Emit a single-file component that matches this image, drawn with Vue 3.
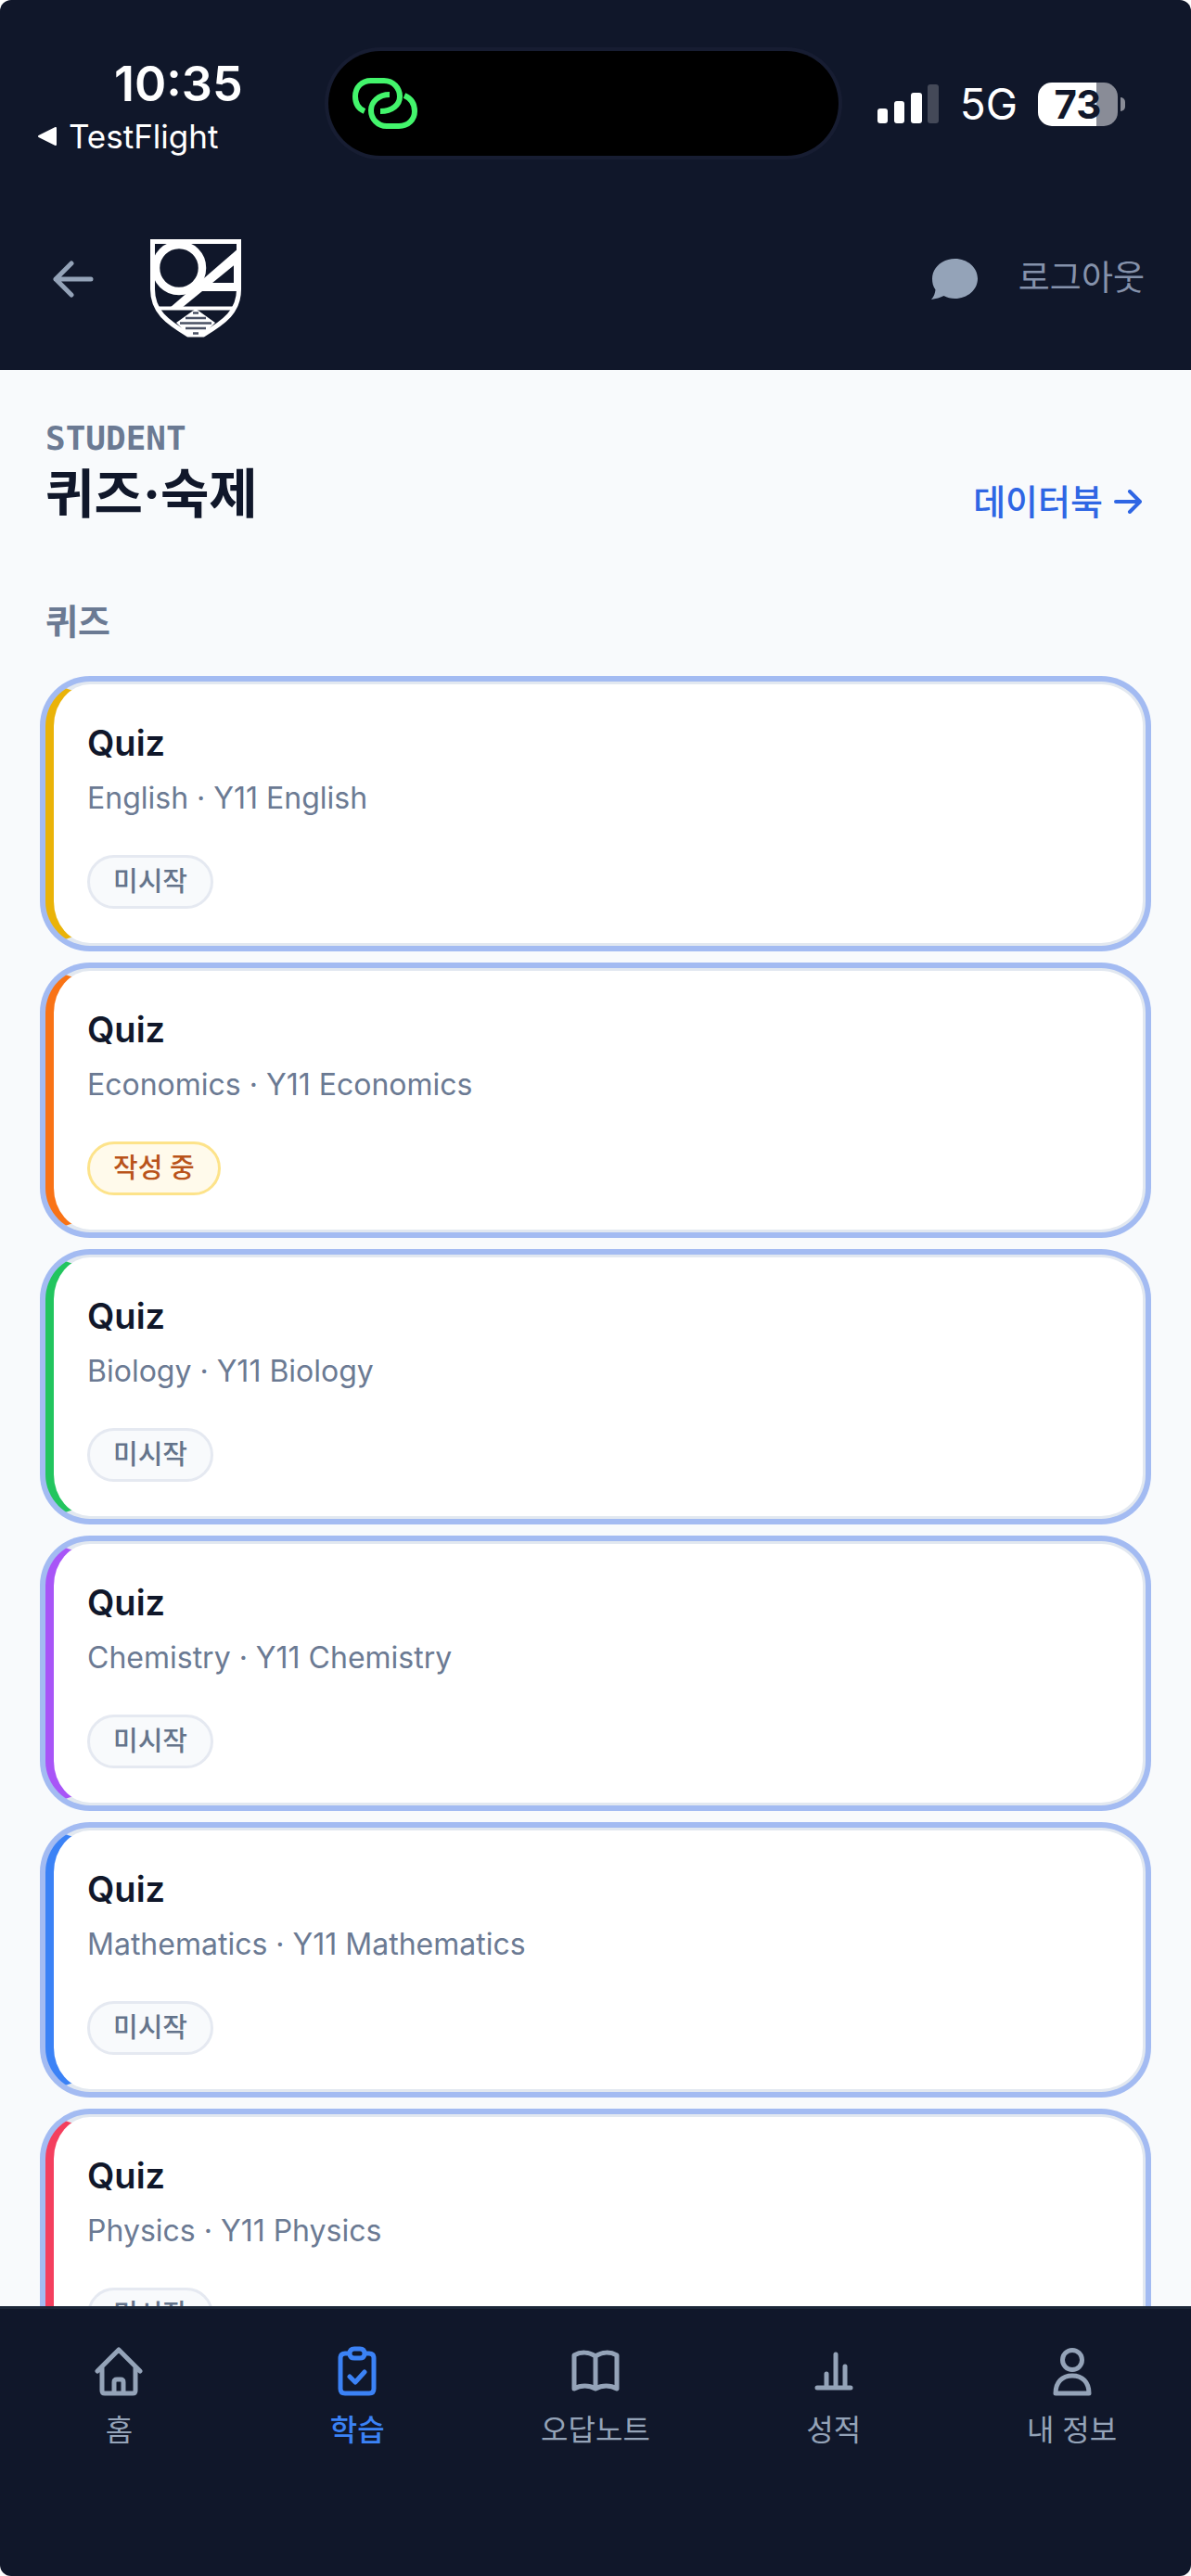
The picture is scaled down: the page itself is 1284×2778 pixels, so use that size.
<script setup>
const quizzes = [
  { subject: 'English', tone: 'yellow', status: '미시작' },
  { subject: 'Economics', tone: 'orange', status: '작성 중', active: true },
  { subject: 'Biology', tone: 'green', status: '미시작' },
  { subject: 'Chemistry', tone: 'purple', status: '미시작' },
  { subject: 'Mathematics', tone: 'blue', status: '미시작' },
  { subject: 'Physics', tone: 'rose', status: '미시작' },
]
</script>

<template>
  <div class="screen">
    <header class="top">
      <div class="status">
        <div class="status-left">
          <span class="clock">10:35</span>
          <a class="return" href="#"><svg width="22" height="22" viewBox="0 0 22 22" aria-hidden="true"><path d="M20 2v18L2 11z" fill="#fff" stroke="#fff" stroke-width="2" stroke-linejoin="round" /></svg>TestFlight</a>
        </div>
        <div class="island">
          <svg width="70" height="56" viewBox="0 0 70 56" fill="none" stroke="#43f56c" stroke-width="6" aria-hidden="true">
            <path d="M13 36C6 33 3 27 3 20 3 10 10 3 20 3H34C44 3 51 11 51 20S43 36 30 36" />
            <path d="M40 18C28 18 20 26 20 35S27 52 37 52H50C60 52 67 45 67 36 67 28 63 22 56 19" />
          </svg>
        </div>
        <div class="status-right">
          <svg width="67" height="44" viewBox="0 0 67 44" fill="#fff" aria-hidden="true">
            <rect x="0" y="27" width="11" height="16" rx="3" /><rect x="18" y="19" width="11" height="24" rx="3" /><rect x="36" y="10" width="12" height="33" rx="3" /><rect x="54" y="1" width="12" height="42" rx="3" opacity=".22" />
          </svg>
          <span class="net">5G</span>
          <div class="battery"><span class="level">73</span></div>
        </div>
      </div>
      <div class="bar">
        <button class="icon-btn" type="button" aria-label="뒤로">
          <svg width="44" height="40" viewBox="0 0 44 40" fill="none" stroke="#94a3b8" stroke-width="5" stroke-linecap="round" stroke-linejoin="round"><path d="M41 20H3M20 3L3 20L20 37" /></svg>
        </button>
        <svg class="logo" width="98" height="106" viewBox="0 0 98 106" fill="none" stroke="#fff" aria-hidden="true">
          <path d="M2.500 2.500H95.500V54C95.500 78 80 89 57 103H41C18 89 2.500 78 2.500 54Z" stroke-width="5" />
          <circle cx="31" cy="31" r="25" stroke-width="8.500" />
          <path d="M95 10L21 74H34L94 25Z" fill="#fff" stroke="none" />
          <path d="M93.500 22V56" stroke-width="7" />
          <path d="M50 51.500H94" stroke-width="9" />
          <path d="M9 74.500H89" stroke-width="4" />
          <path d="M49 75L70 90L56 104H42L28 90Z" fill="#fff" stroke="none" />
          <path d="M46 79.500H52M38 85H60M32 90.500H66M38 96H60M46 101.500H52" stroke="#4a5164" stroke-width="2.500" />
        </svg>
        <button class="icon-btn chat" type="button" aria-label="메시지">
          <svg width="50" height="46" viewBox="0 0 50 46" fill="#94a3b8"><path d="M25.500 1C39 1 50 10.500 50 22.500S39 44 25.500 44C21 44 17 43 13.500 41 10 43 5 44 0 45 3 42 4 38 4.500 34.500 2 31 1 27 1 22.500 1 10.500 12 1 25.500 1Z" /></svg>
        </button>
        <button class="logout" type="button">로그아웃</button>
      </div>
    </header>

    <main class="content">
      <div class="heading">
        <div>
          <p class="eyebrow">STUDENT</p>
          <h1>퀴즈·숙제</h1>
        </div>
        <a class="book-link" href="#">데이터북
          <svg width="30" height="26" viewBox="0 0 30 26" fill="none" stroke="#2f66e4" stroke-width="4" stroke-linejoin="round" stroke-linecap="round" aria-hidden="true"><path d="M2 13H28M17 2L28 13L17 24" /></svg>
        </a>
      </div>
      <h2>퀴즈</h2>
      <ul class="list">
        <li v-for="q in quizzes" :key="q.subject" class="card" :class="q.tone">
          <h3>Quiz</h3>
          <p class="meta">{{ q.subject }} · Y11 {{ q.subject }}</p>
          <span class="badge" :class="{ active: q.active }">{{ q.status }}</span>
        </li>
      </ul>
    </main>

    <nav class="tabs">
      <a href="#" class="tab">
        <svg viewBox="0 0 60 60"><path d="M7 30L30 7L53 30M12 26V51Q12 54 15 54H45Q48 54 48 51V26M25 54V42Q25 39 28 39H32Q35 39 35 42V54" /></svg>홈
      </a>
      <a href="#" class="tab on">
        <svg viewBox="0 0 60 60"><path d="M22 11H17Q12 11 12 16V49Q12 54 17 54H43Q48 54 48 49V16Q48 11 43 11H38M27 6H33Q38 6 38 11T33 16H27Q22 16 22 11T27 6ZM22 36L28 42L38 31" /></svg>학습
      </a>
      <a href="#" class="tab">
        <svg viewBox="0 0 60 60"><path d="M30 14C23 9 14 9 7 13V49C14 45 23 45 30 49C37 45 46 45 53 49V13C46 9 37 9 30 14V49" /></svg>오답노트
      </a>
      <a href="#" class="tab">
        <svg viewBox="0 0 60 60"><path d="M12 48H48M22 48V33M32 48V12M42 48V25" /></svg>성적
      </a>
      <a href="#" class="tab">
        <svg viewBox="0 0 60 60"><circle cx="30" cy="18" r="10.500" /><path d="M12 54C12 42 19 35 30 35S48 42 48 54Z" /></svg>내 정보
      </a>
    </nav>
  </div>
</template>

<style>
html, body { margin: 0; background: #fff; }
</style>

<style scoped>
.screen {
  height: 100vh;
  display: flex;
  flex-direction: column;
  overflow: hidden;
  border-radius: 12px;
  background: #f8fafc;
  color: #10172a;
  font-family: Inter, "Noto Sans CJK KR", sans-serif;
}
h1, h2, h3, p, ul { margin: 0; padding: 0; }
a { color: inherit; text-decoration: none; }
button { border: 0; padding: 0; background: none; font: inherit; color: inherit; }
svg { display: block; flex: none; }

.top { flex: none; background: #10172a; color: #fff; }
.status { display: flex; justify-content: space-between; height: 200px; }
.status-left { flex: 1; padding: 65px 0 0 40px; }
.clock { display: block; margin-left: 83px; font-size: 52px; line-height: 52px; font-weight: 600; }
.return { display: flex; align-items: center; gap: 12px; margin-top: 10px; font-size: 35px; line-height: 40px; }
.island {
  flex: none;
  width: 550px;
  height: 113px;
  margin-top: 55px;
  padding-left: 26px;
  box-sizing: border-box;
  display: flex;
  align-items: center;
  border-radius: 57px;
  background: #000;
  box-shadow: 0 0 0 4px #171d32;
}
.status-right { flex: none; display: flex; align-items: center; height: 48px; margin-top: 88px; padding: 0 79px 0 42px; }
.net { margin-left: 22px; font-size: 46px; line-height: 48px; }
.battery {
  position: relative;
  width: 86px;
  height: 47px;
  margin-left: 22px;
  border-radius: 15px;
  background: linear-gradient(90deg, #fff 63px, #898c97 63px);
}
.battery::after {
  content: "";
  position: absolute;
  left: 89px;
  top: 16px;
  width: 5px;
  height: 15px;
  border-radius: 0 5px 5px 0;
  background: #898c97;
}
.level { display: block; text-align: center; font-size: 42px; line-height: 47px; font-weight: 700; color: #10172a; }
.bar { display: flex; align-items: flex-start; height: 199px; padding: 0 50px 0 57px; }
.icon-btn { margin-top: 81px; }
.logo { margin: 58px 0 0 61px; }
.chat { margin: 78px 0 0 auto; }
.logout { margin: 75px 0 0 44px; font-size: 37px; line-height: 50px; color: #8592ab; }

.content { flex: 1; min-height: 0; overflow: hidden; padding: 52px 49px 0; }
.heading { display: flex; justify-content: space-between; align-items: flex-end; }
.eyebrow { font: 700 36px/44px "DejaVu Sans Mono", monospace; color: #6b7a93; }
h1 { font-size: 57px; line-height: 76px; font-weight: 700; }
.book-link { display: flex; align-items: center; gap: 12px; padding-right: 4px; font-size: 38px; line-height: 60px; font-weight: 500; color: #2f66e4; }
h2 { margin-top: 69px; font-size: 38px; line-height: 60px; font-weight: 700; color: #6b7a93; }
.list { display: flex; flex-direction: column; gap: 24px; margin-top: 35px; list-style: none; }
.card {
  height: 285px;
  box-sizing: border-box;
  padding: 35px 36px 0;
  border: 3px solid #e2e8f0;
  border-left: 9px solid;
  border-radius: 48px;
  background: #fff;
  box-shadow: 0 0 0 6px #a3bbf2;
}
.yellow { border-left-color: #eab308; }
.orange { border-left-color: #f97316; }
.green { border-left-color: #22c55e; }
.purple { border-left-color: #a855f7; }
.blue { border-left-color: #3b82f6; }
.rose { border-left-color: #f43f5e; }
h3 { font-size: 38px; line-height: 56px; font-weight: 600; color: #10172a; }
.meta { margin-top: 4px; font-size: 32px; line-height: 56px; color: #6b7a93; }
.badge {
  display: inline-block;
  margin-top: 33px;
  padding: 0 25px;
  border: 3px solid #e5e9f1;
  border-radius: 29px;
  background: #f8fafc;
  color: #64748b;
  font-size: 29px;
  line-height: 52px;
  font-weight: 500;
}
.badge.active { border-color: #fde38a; background: #fffaeb; color: #b9531a; }

.tabs {
  flex: none;
  display: grid;
  grid-template-columns: repeat(5, 1fr);
  height: 291px;
  box-sizing: border-box;
  border-top: 3px solid #1b2638;
  background: #10172a;
}
.tab {
  display: flex;
  flex-direction: column;
  align-items: center;
  gap: 12px;
  padding-top: 37px;
  font-size: 32px;
  line-height: 44px;
  font-weight: 400;
  color: #94a3b8;
}
.tab svg { width: 60px; height: 60px; fill: none; stroke: currentColor; stroke-width: 5; stroke-linecap: round; stroke-linejoin: round; }
.tab.on { color: #3b82f6; font-weight: 500; }
</style>
